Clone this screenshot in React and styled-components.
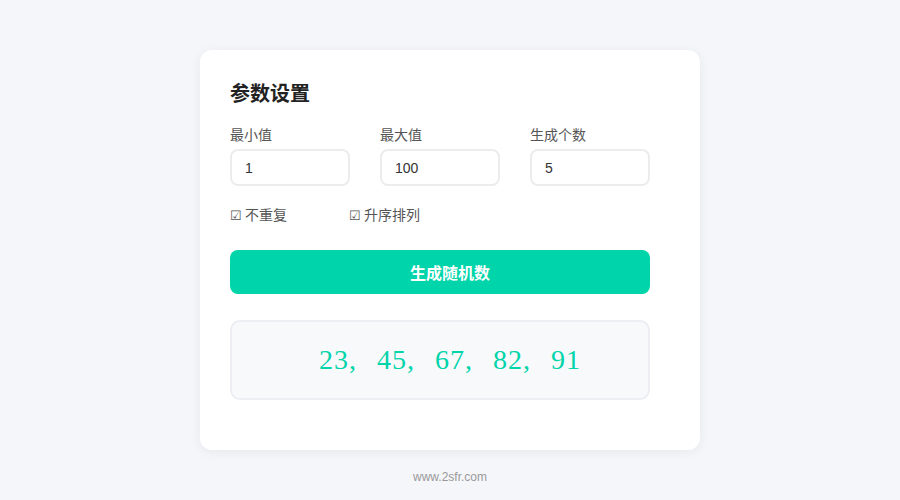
import React from "react";
import styled, { createGlobalStyle } from "styled-components";

const Global = createGlobalStyle`
  html, body { margin: 0; padding: 0; background: #f5f6fa; }
  body { font-family: "Liberation Sans", "Noto Sans CJK SC", sans-serif; }
  * { box-sizing: border-box; }
`;

const Page = styled.div`
  width: 900px;
  height: 500px;
  display: flex;
  flex-direction: column;
  align-items: center;
  padding-top: 50px;
`;

const Card = styled.div`
  width: 500px;
  height: 400px;
  background: #fff;
  border-radius: 12px;
  box-shadow: 0 2px 12px rgba(0, 0, 0, 0.06);
  padding: 29px 30px 30px;
`;

const Body = styled.div`
  width: 420px;
  display: flex;
  flex-direction: column;
`;

const Title = styled.h2`
  margin: 0;
  font-size: 20px;
  font-weight: 700;
  color: #222;
  line-height: 30px;
`;

const Fields = styled.div`
  margin-top: 17px;
  display: grid;
  grid-template-columns: repeat(3, 120px);
  column-gap: 30px;
`;

const Field = styled.div`
  display: flex;
  flex-direction: column;
  gap: 4px;
`;

const Label = styled.label`
  font-size: 14px;
  color: #555;
  line-height: 19px;
`;

const Input = styled.input`
  width: 120px;
  height: 37px;
  border: 2px solid #ececec;
  border-radius: 8px;
  padding: 0 13px;
  font-size: 14px;
  color: #333;
  font-family: "Liberation Sans", "Noto Sans CJK SC", sans-serif;
  outline: none;
  background: #fff;
`;

const Options = styled.div`
  margin-top: 20px;
  display: flex;
  gap: 62px;
`;

const Option = styled.span`
  font-size: 14px;
  color: #555;
  line-height: 18px;
`;

const Box = styled.span`
  font-size: 13px;
  margin-right: 3px;
`;

const Button = styled.button`
  margin-top: 25px;
  height: 44px;
  width: 100%;
  border: none;
  border-radius: 8px;
  background: #00d4aa;
  color: #fff;
  padding: 0 0 0 20px;
  font-size: 16px;
  font-weight: 700;
  font-family: "Liberation Sans", "Noto Sans CJK SC", sans-serif;
  cursor: pointer;
`;

const Result = styled.div`
  margin-top: 26px;
  height: 80px;
  border: 2px solid #eceef3;
  border-radius: 10px;
  background: #f8f9fb;
  padding-left: 20px;
  display: flex;
  align-items: center;
  justify-content: center;
  font-family: "Liberation Serif", serif;
  font-size: 28px;
  letter-spacing: 1px;
  word-spacing: 12px;
  color: #00d4aa;
`;

const Footer = styled.div`
  margin-top: 20px;
  font-size: 12px;
  color: #999;
`;

export default function App() {
  return (
    <>
      <Global />
      <Page>
        <Card>
          <Body>
            <Title>参数设置</Title>
            <Fields>
              <Field>
                <Label>最小值</Label>
                <Input defaultValue="1" />
              </Field>
              <Field>
                <Label>最大值</Label>
                <Input defaultValue="100" />
              </Field>
              <Field>
                <Label>生成个数</Label>
                <Input defaultValue="5" />
              </Field>
            </Fields>
            <Options>
              <Option><Box>☑</Box>不重复</Option>
              <Option><Box>☑</Box>升序排列</Option>
            </Options>
            <Button>生成随机数</Button>
            <Result>23, 45, 67, 82, 91</Result>
          </Body>
        </Card>
        <Footer>www.2sfr.com</Footer>
      </Page>
    </>
  );
}
